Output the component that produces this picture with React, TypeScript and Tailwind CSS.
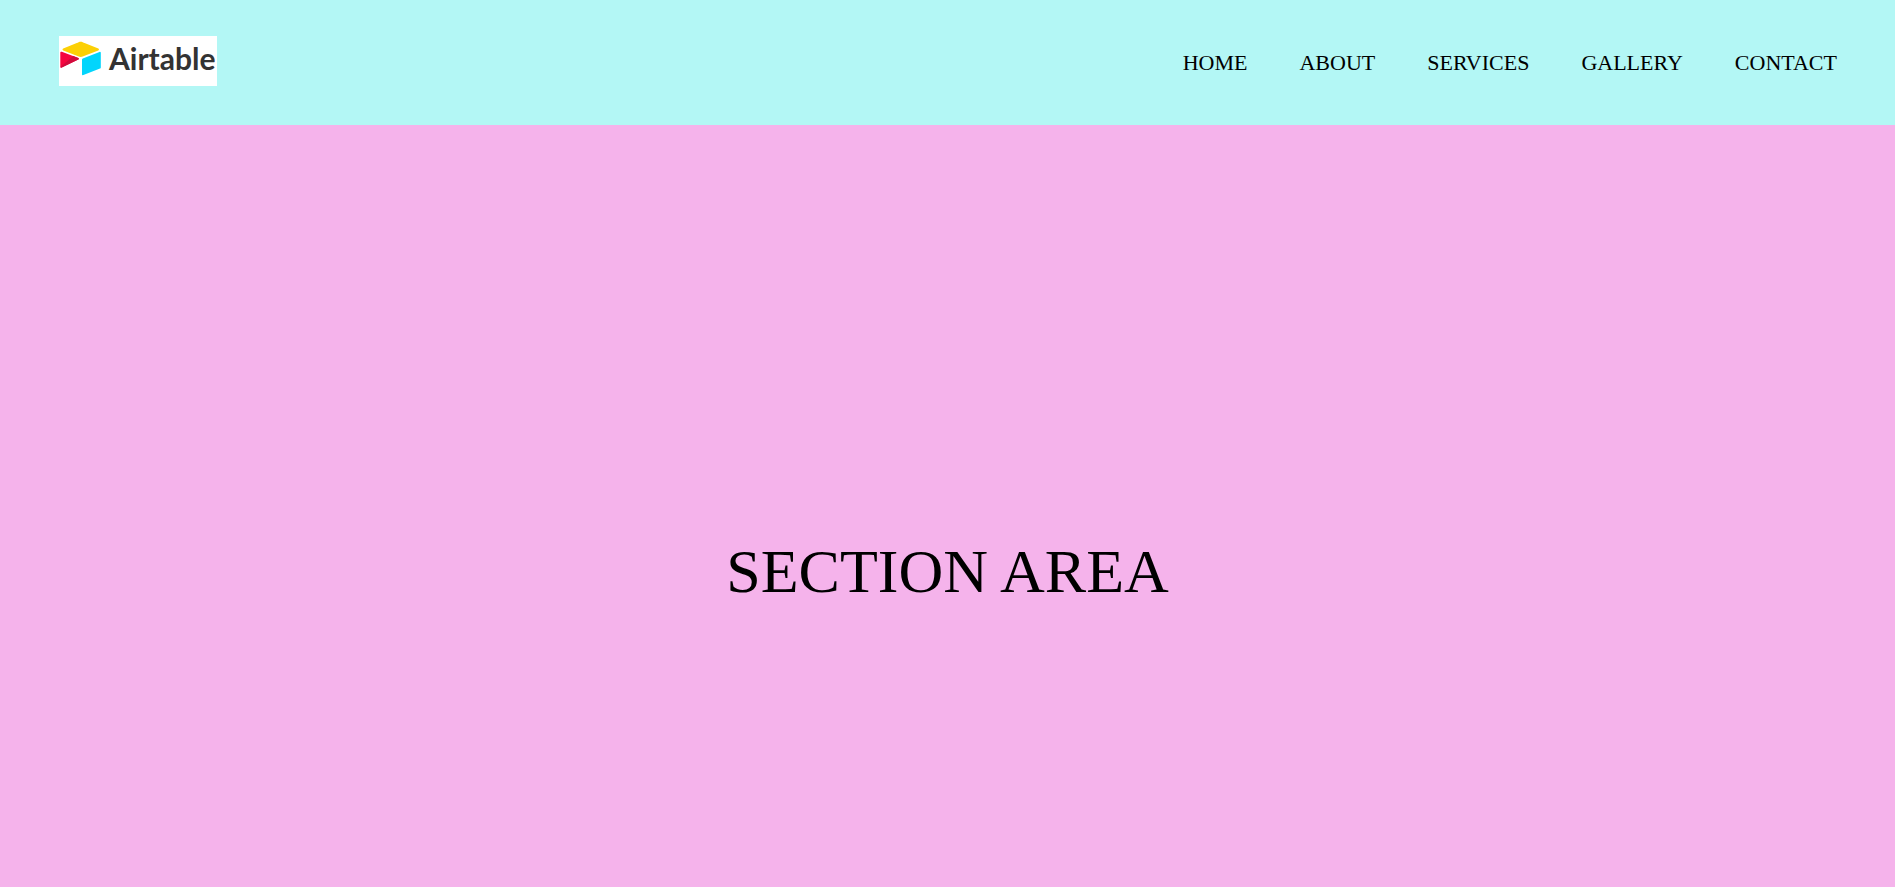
const links = ["HOME", "ABOUT", "SERVICES", "GALLERY", "CONTACT"];

function Logo() {
  return (
    <a href="#home" className="flex h-[50px] w-[158px] items-start bg-white">
      <svg
        className="mt-[5px] ml-px h-[36px] w-[42px] shrink-0"
        viewBox="0 0 42 36"
        aria-hidden="true"
      >
        <path
          fill="#fcd005"
          d="M18.6 1.2 3.2 7.6c-.9.4-.9 1.4 0 1.8l15.6 6.1c1.3.5 2.6.5 3.9 0l15.6-6.1c.9-.4.9-1.4 0-1.8L22.7 1.2c-1.3-.5-2.8-.5-4.1 0Z"
        />
        <path
          fill="#02d5fc"
          d="M22 18.500v14.700c0 .8.7 1.200 1.400.9l16.600-6.500c.5-.2.800-.6.800-1.100V11.800c0-.8-.6-1.200-1.300-.9L22.800 17.400c-.5.200-.8.600-.8 1.100Z"
        />
        <path
          fill="#f5053f"
          d="M18.300 18.600 1.800 26.600c-.7.300-1.500-.2-1.500-.9V11.700c0-.9.800-1.200 1.500-.9L18.300 17c.8.400.8 1.300 0 1.600Z"
        />
        <path fill="#d10a3c" d="M18.300 18.600 1.800 26.600c-.5.200-1.100 0-1.400-.5L13.300 15.100 18.300 17c.8.400.8 1.300 0 1.600Z" />
      </svg>
      <span className="ml-[7px] mt-[3px] font-['Lato',sans-serif] text-[30px] leading-[38px] font-bold text-[#333333]">
        Airtable
      </span>
    </a>
  );
}

export default function App() {
  return (
    <div className="flex min-h-screen flex-col bg-[#f5b3eb] font-['Liberation_Serif',serif] text-black">
      <header className="flex items-center justify-between bg-[#b3f7f5] pt-9 pr-[58px] pb-[39px] pl-[59px]">
        <Logo />
        <nav className="pt-1">
          <ul className="flex gap-[52px] text-[22px] leading-7">
            {links.map((link) => (
              <li key={link}>
                <a href={`#${link.toLowerCase()}`}>{link}</a>
              </li>
            ))}
          </ul>
        </nav>
      </header>
      <main className="flex h-screen items-center justify-center pt-1">
        <h1 className="text-[62px] leading-[72px]">SECTION AREA</h1>
      </main>
    </div>
  );
}
